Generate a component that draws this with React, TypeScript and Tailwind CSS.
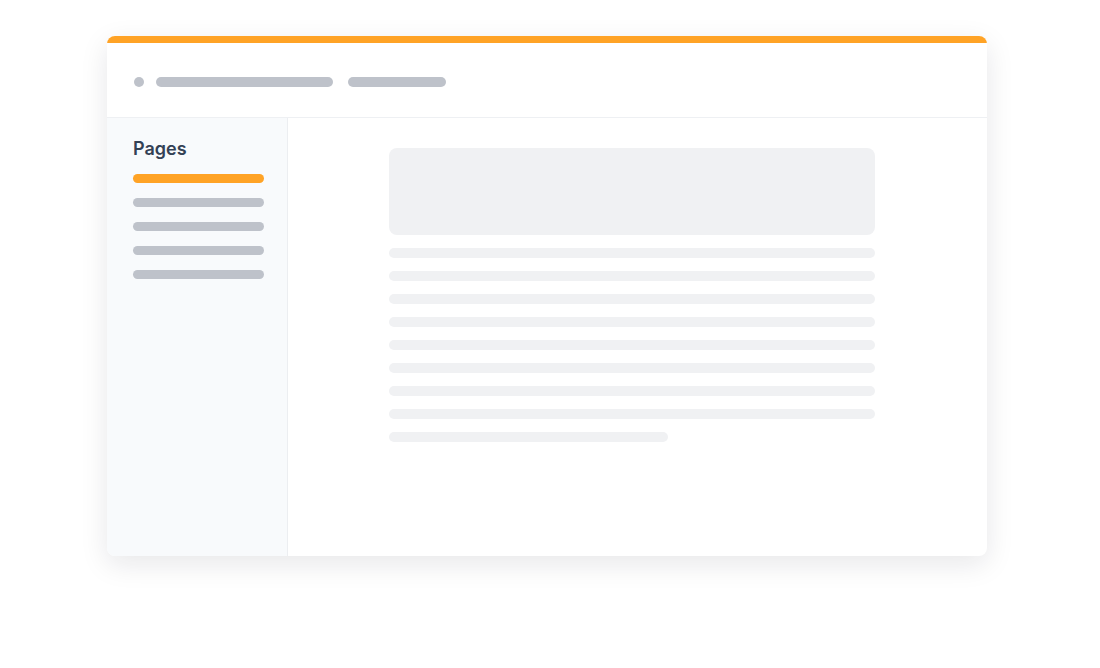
import React from 'react';

const lineWidths = ['w-full', 'w-full', 'w-full', 'w-full', 'w-full', 'w-full', 'w-full', 'w-full', 'w-[279px]'];

const App = () => {
  return (
    <div className="w-[1100px] h-[668px] bg-white pt-[36px] pl-[107px]" style={{ fontFamily: 'Inter, "Noto Sans", sans-serif' }}>
      <div className="w-[880px] h-[520px] rounded-lg bg-white overflow-hidden shadow-[0_8px_28px_rgba(15,23,42,0.10)] flex flex-col">
        {/* top accent */}
        <div className="h-[7px] bg-[#ffa326] shrink-0" />

        {/* header */}
        <div className="h-[75px] border-b border-[#eef0f3] flex items-center pl-[27px] pt-[4px] shrink-0">
          <div className="w-[10px] h-[10px] rounded-full bg-[#bec2ca]" />
          <div className="ml-[12px] w-[177px] h-[10px] rounded-full bg-[#bec2ca]" />
          <div className="ml-[15px] w-[98px] h-[10px] rounded-full bg-[#bec2ca]" />
        </div>

        <div className="flex flex-1">
          {/* sidebar */}
          <div className="w-[181px] bg-[#f8fafc] border-r border-[#eceef1] pl-[26px] pt-[20px]">
            <div className="text-[18px] font-semibold leading-[22px] text-[#334155]">Pages</div>
            <div className="mt-[14px] flex flex-col gap-[15px]">
              <div className="w-[131px] h-[9px] rounded-full bg-[#ffa326]" />
              <div className="w-[131px] h-[9px] rounded-full bg-[#bec2ca]" />
              <div className="w-[131px] h-[9px] rounded-full bg-[#bec2ca]" />
              <div className="w-[131px] h-[9px] rounded-full bg-[#bec2ca]" />
              <div className="w-[131px] h-[9px] rounded-full bg-[#bec2ca]" />
            </div>
          </div>

          {/* main */}
          <div className="flex-1 pl-[101px] pt-[30px]">
            <div className="w-[486px]">
              <div className="h-[87px] rounded-lg bg-[#f0f1f3]" />
              <div className="mt-[13px] flex flex-col gap-[13px]">
                {lineWidths.map((w, i) => (
                  <div key={i} className={`${w} h-[10px] rounded-full bg-[#f0f1f3]`} />
                ))}
              </div>
            </div>
          </div>
        </div>
      </div>
    </div>
  );
};

export default App;
